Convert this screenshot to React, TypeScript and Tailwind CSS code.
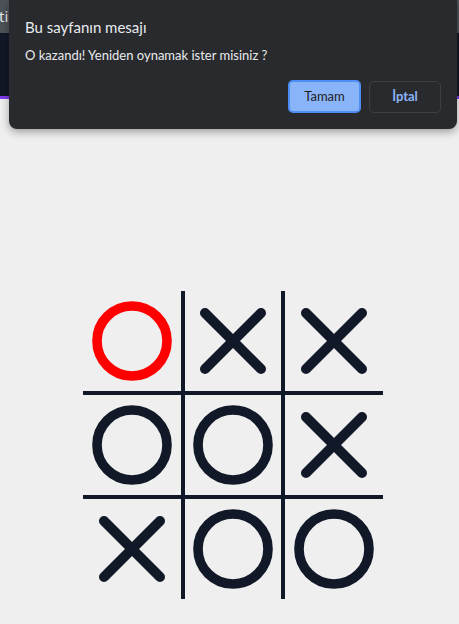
const board: ("X" | "O")[][] = [
  ["O", "X", "X"],
  ["O", "O", "X"],
  ["X", "O", "O"],
];

function Mark({ value, win }: { value: "X" | "O"; win?: boolean }) {
  const color = win ? "#ff0000" : "#111827";
  if (value === "O") {
    return (
      <svg width="80" height="80" viewBox="0 0 80 80">
        <circle cx="40" cy="40" r="35" fill="none" stroke={color} strokeWidth="9.6" />
      </svg>
    );
  }
  return (
    <svg width="80" height="80" viewBox="0 0 80 80">
      <path d="M12 12 L68 68 M68 12 L12 68" stroke={color} strokeWidth="10" strokeLinecap="round" />
    </svg>
  );
}

const colW = ["w-[102px] border-r-4", "w-[100px] border-r-4", "w-[98px]"];
const rowH = ["h-[104px] border-b-4", "h-[104px] border-b-4", "h-[100px]"];

export default function App() {
  return (
    <div className="relative min-h-[624px] bg-[#efefef] font-['Noto_Sans',sans-serif] overflow-hidden">
      <header>
        <div className="h-[33px] bg-[#4c5257] flex items-center text-[15px] text-[#e5e7eb]">
          <span className="-ml-[1px]">tir</span>
        </div>
        <div className="h-[63px] bg-[#111827]" />
        <div className="h-[3px] bg-[#7c3aed]" />
      </header>

      <main className="pt-[192px] pl-[83px]">
        <div className="flex flex-col">
          {board.map((row, r) => (
            <div key={r} className="flex">
              {row.map((cell, c) => (
                <div
                  key={c}
                  className={`${colW[c]} ${rowH[r]} border-[#111827] flex items-center justify-center`}
                >
                  <Mark value={cell} win={r === 0 && c === 0} />
                </div>
              ))}
            </div>
          ))}
        </div>
      </main>

      <div className="absolute left-[9px] top-0 w-[448px] h-[129px] bg-[#292a2d] rounded-b-[8px] shadow-[0_3px_8px_rgba(0,0,0,0.35)] px-4 pt-[15px] font-['Lato',sans-serif]">
        <h2 className="text-[15px] leading-[24px] text-[#e8eaed]">Bu sayfanın mesajı</h2>
        <p className="mt-[6px] text-[13px] leading-[20px] text-[#e8eaed]">
          O kazandı! Yeniden oynamak ister misiniz ?
        </p>
        <div className="mt-[15px] flex justify-end gap-2">
          <button className="w-[73px] h-[33px] rounded-[5px] bg-[#8ab4f8] border-2 border-[#4d8ef5] text-[13px] text-[#202124]">
            Tamam
          </button>
          <button className="w-[72px] h-[32px] mt-[1px] rounded-[5px] border border-[#3c4043] text-[13px] font-bold text-[#8ab4f8]">
            İptal
          </button>
        </div>
      </div>
    </div>
  );
}
